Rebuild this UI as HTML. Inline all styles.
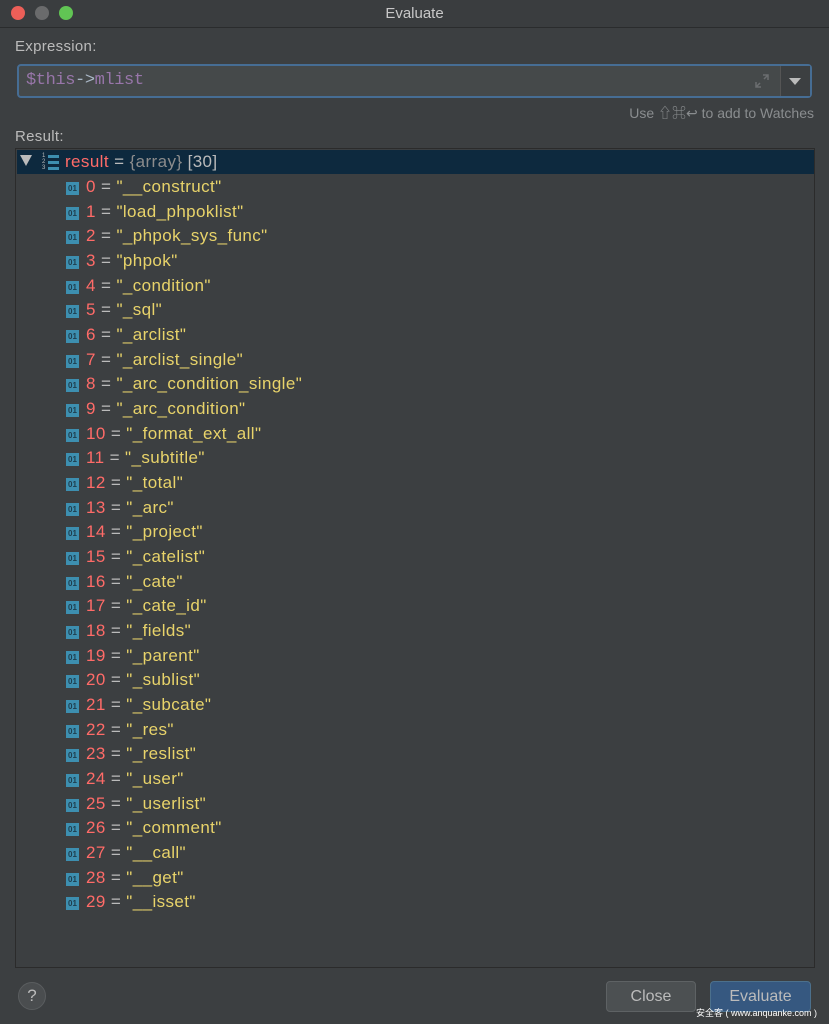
<!DOCTYPE html>
<html><head><meta charset="utf-8"><style>
body{margin:0;width:829px;height:1024px;background:#3c3f41;font-family:"Liberation Sans","Noto Sans CJK SC",sans-serif;overflow:hidden;position:relative}
.tb{position:absolute;left:0;top:0;width:829px;height:27px;background:#3a3d3f;border-bottom:1px solid #2a2c2d;color:#c8c8c8;font-size:15px;text-align:center;line-height:27px}
.dot{position:absolute;top:6px;width:14px;height:14px;border-radius:50%}
.lbl{position:absolute;left:15px;color:#bbbbbb;font-size:15px;letter-spacing:0.3px}
.inp{position:absolute;left:17px;top:64px;width:791px;height:30px;border:2px solid #466d94;border-radius:4px;background:#45494a}
.inp .t{position:absolute;left:7px;top:5px;font-family:"Liberation Mono",monospace;font-size:17px;color:#9876aa;letter-spacing:-0.4px}
.dd{position:absolute;right:0;top:0;width:29px;height:30px;border-left:1px solid #555;background:#3c3f41}
.tree{position:absolute;left:15px;top:148px;width:798px;height:818px;border:1px solid #2b2b2b;background:#3c3f41}
.sel{position:absolute;left:1px;top:1px;width:797px;height:24px;background:#0d293e}
.row{position:absolute;left:50px;height:24px;line-height:24px;font-size:17px;letter-spacing:0.4px;white-space:pre;color:#bbbbbb}
.ic{display:inline-block;width:13px;height:13px;background:#3d8fb0;color:#1e3d4d;font-size:8px;line-height:13px;text-align:center;font-weight:bold;vertical-align:1px;margin-right:7px;letter-spacing:0}
.n{color:#ff6b68}.s{color:#e8d36a}
.btn{position:absolute;top:981px;height:29px;border-radius:4px;font-size:16px;text-align:center;line-height:29px;color:#bbbbbb}
</style></head><body>
<div class="tb">Evaluate
<div class="dot" style="left:11px;background:#ec5f58"></div>
<div class="dot" style="left:35px;background:#6a6b6c"></div>
<div class="dot" style="left:59px;background:#61c554"></div></div>
<div class="lbl" style="top:38px">Expression:</div>
<div class="inp"><span class="t">$this<span style="color:#a9b7c6">-&gt;</span>mlist</span>
<svg style="position:absolute;right:40px;top:7px" width="16" height="16" viewBox="0 0 16 16"><path d="M9 2h5v5M14 2l-4 4M7 14H2V9M2 14l4-4" stroke="#6b6e70" stroke-width="1.5" fill="none"/></svg>
<div class="dd"><svg style="position:absolute;left:8px;top:12px" width="12" height="7"><path d="M0 0h12L6 7z" fill="#bbb"/></svg></div></div>
<div style="position:absolute;right:15px;top:103px;color:#8a8d8f;font-size:14px">Use ⇧⌘↩ to add to Watches</div>
<div class="lbl" style="top:128px">Result:</div>
<div class="tree"><div class="sel"></div>
<svg style="position:absolute;left:4px;top:6px" width="12" height="11"><path d="M0 0h12L6 11z" fill="#bbb"/></svg>
<div style="position:absolute;left:26px;top:5px;width:18px;height:17px"><span style="position:absolute;left:0;top:-1px;font-size:6px;color:#bbb;line-height:6px">1<br>2<br>3</span><div style="position:absolute;left:6px;top:1px;width:11px;height:3px;background:#3d8fb0"></div><div style="position:absolute;left:6px;top:7px;width:11px;height:3px;background:#3d8fb0"></div><div style="position:absolute;left:6px;top:13px;width:11px;height:3px;background:#3d8fb0"></div></div>
<div class="row" style="left:49px;top:1px"><span class="n">result</span> = <span style="color:#8c8c8c">{array}</span> [30]</div>
<div class="row" style="top:26px"><span class="ic">01</span><span class="n">0</span> = <span class="s">"__construct"</span></div>
<div class="row" style="top:50.6px"><span class="ic">01</span><span class="n">1</span> = <span class="s">"load_phpoklist"</span></div>
<div class="row" style="top:75.3px"><span class="ic">01</span><span class="n">2</span> = <span class="s">"_phpok_sys_func"</span></div>
<div class="row" style="top:100px"><span class="ic">01</span><span class="n">3</span> = <span class="s">"phpok"</span></div>
<div class="row" style="top:124.6px"><span class="ic">01</span><span class="n">4</span> = <span class="s">"_condition"</span></div>
<div class="row" style="top:149.3px"><span class="ic">01</span><span class="n">5</span> = <span class="s">"_sql"</span></div>
<div class="row" style="top:174px"><span class="ic">01</span><span class="n">6</span> = <span class="s">"_arclist"</span></div>
<div class="row" style="top:198.6px"><span class="ic">01</span><span class="n">7</span> = <span class="s">"_arclist_single"</span></div>
<div class="row" style="top:223.3px"><span class="ic">01</span><span class="n">8</span> = <span class="s">"_arc_condition_single"</span></div>
<div class="row" style="top:248px"><span class="ic">01</span><span class="n">9</span> = <span class="s">"_arc_condition"</span></div>
<div class="row" style="top:272.6px"><span class="ic">01</span><span class="n">10</span> = <span class="s">"_format_ext_all"</span></div>
<div class="row" style="top:297.3px"><span class="ic">01</span><span class="n">11</span> = <span class="s">"_subtitle"</span></div>
<div class="row" style="top:322px"><span class="ic">01</span><span class="n">12</span> = <span class="s">"_total"</span></div>
<div class="row" style="top:346.6px"><span class="ic">01</span><span class="n">13</span> = <span class="s">"_arc"</span></div>
<div class="row" style="top:371.3px"><span class="ic">01</span><span class="n">14</span> = <span class="s">"_project"</span></div>
<div class="row" style="top:396px"><span class="ic">01</span><span class="n">15</span> = <span class="s">"_catelist"</span></div>
<div class="row" style="top:420.6px"><span class="ic">01</span><span class="n">16</span> = <span class="s">"_cate"</span></div>
<div class="row" style="top:445.3px"><span class="ic">01</span><span class="n">17</span> = <span class="s">"_cate_id"</span></div>
<div class="row" style="top:470px"><span class="ic">01</span><span class="n">18</span> = <span class="s">"_fields"</span></div>
<div class="row" style="top:494.6px"><span class="ic">01</span><span class="n">19</span> = <span class="s">"_parent"</span></div>
<div class="row" style="top:519.3px"><span class="ic">01</span><span class="n">20</span> = <span class="s">"_sublist"</span></div>
<div class="row" style="top:544px"><span class="ic">01</span><span class="n">21</span> = <span class="s">"_subcate"</span></div>
<div class="row" style="top:568.6px"><span class="ic">01</span><span class="n">22</span> = <span class="s">"_res"</span></div>
<div class="row" style="top:593.3px"><span class="ic">01</span><span class="n">23</span> = <span class="s">"_reslist"</span></div>
<div class="row" style="top:618px"><span class="ic">01</span><span class="n">24</span> = <span class="s">"_user"</span></div>
<div class="row" style="top:642.6px"><span class="ic">01</span><span class="n">25</span> = <span class="s">"_userlist"</span></div>
<div class="row" style="top:667.3px"><span class="ic">01</span><span class="n">26</span> = <span class="s">"_comment"</span></div>
<div class="row" style="top:692px"><span class="ic">01</span><span class="n">27</span> = <span class="s">"__call"</span></div>
<div class="row" style="top:716.6px"><span class="ic">01</span><span class="n">28</span> = <span class="s">"__get"</span></div>
<div class="row" style="top:741.3px"><span class="ic">01</span><span class="n">29</span> = <span class="s">"__isset"</span></div>
</div>
<div style="position:absolute;left:18px;top:982px;width:26px;height:26px;border-radius:50%;background:#4a4d4f;border:1px solid #5a5d5f;color:#bbb;text-align:center;line-height:26px;font-size:17px">?</div>
<div class="btn" style="left:606px;width:88px;background:#4c5052;border:1px solid #5e6264">Close</div>
<div class="btn" style="left:710px;width:99px;background:#365880;border:1px solid #4c708c">Evaluate</div>
<div style="position:absolute;left:696px;top:1006px;color:#fff;font-size:9px;white-space:nowrap">安全客 ( www.anquanke.com )</div>
</body></html>
